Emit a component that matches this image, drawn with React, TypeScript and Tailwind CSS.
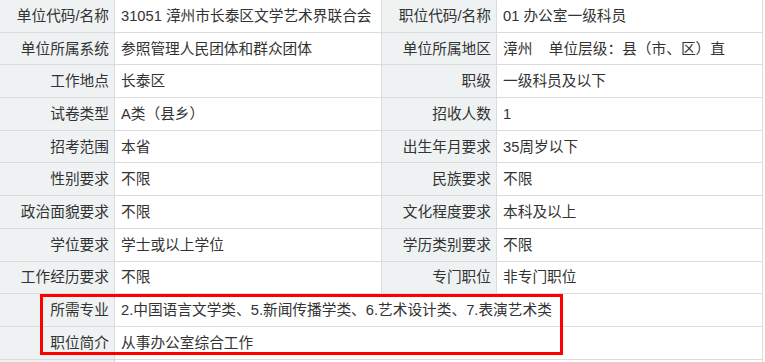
const rows: [string, string, string, string][] = [
  ["单位代码/名称", "31051 漳州市长泰区文学艺术界联合会", "职位代码/名称", "01 办公室一级科员"],
  ["单位所属系统", "参照管理人民团体和群众团体", "单位所属地区", "漳州    单位层级：县（市、区）直"],
  ["工作地点", "长泰区", "职级", "一级科员及以下"],
  ["试卷类型", "A类（县乡）", "招收人数", "1"],
  ["招考范围", "本省", "出生年月要求", "35周岁以下"],
  ["性别要求", "不限", "民族要求", "不限"],
  ["政治面貌要求", "不限", "文化程度要求", "本科及以上"],
  ["学位要求", "学士或以上学位", "学历类别要求", "不限"],
  ["工作经历要求", "不限", "专门职位", "非专门职位"],
];

const wide: [string, string][] = [
  ["所需专业", "2.中国语言文学类、5.新闻传播学类、6.艺术设计类、7.表演艺术类"],
  ["职位简介", "从事办公室综合工作"],
];

const label = "flex items-center justify-end pr-[5px] bg-[#eef2f2] border-r border-[#dcdcdc] whitespace-pre";
const value = "flex items-center pl-[6px] border-r border-[#dcdcdc] whitespace-pre";

export default function App() {
  return (
    <div
      className="relative w-[765px] h-[362px] overflow-hidden bg-white text-[14.7px] text-[#333]"
      style={{ fontFamily: '"Liberation Sans", "Noto Sans CJK SC", sans-serif' }}
    >
      <div className="w-[763px]">
        {rows.map((r, i) => (
          <div key={i} className="flex h-[32.7px] border-b border-[#dcdcdc]">
            <div className={`${label} w-[115px]`}>{r[0]}</div>
            <div className={`${value} w-[267px]`}>{r[1]}</div>
            <div className={`${label} w-[115px]`}>{r[2]}</div>
            <div className={`${value} w-[266px]`}>{r[3]}</div>
          </div>
        ))}
        {wide.map((r, i) => (
          <div key={i} className="flex h-[32.7px] border-b border-[#dcdcdc]">
            <div className={`${label} w-[115px]`}>{r[0]}</div>
            <div className={`${value} w-[648px]`}>{r[1]}</div>
          </div>
        ))}
        <div className="flex h-[10px]">
          <div className="w-[115px] bg-[#eef2f2] border-r border-[#dcdcdc]" />
          <div className="w-[648px] border-r border-[#dcdcdc]" />
        </div>
      </div>

      {/* 红框标注 */}
      <div className="absolute left-[40px] top-[294px] w-[523px] h-[61px] border-[3px] border-[#ff0000]" />
    </div>
  );
}
